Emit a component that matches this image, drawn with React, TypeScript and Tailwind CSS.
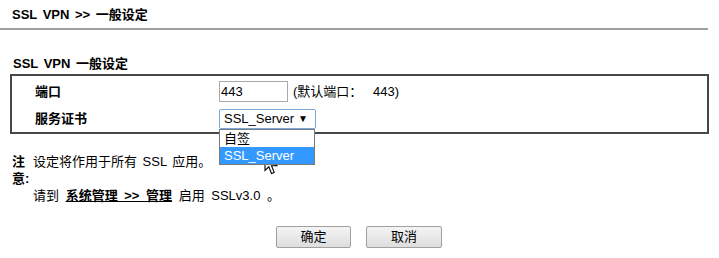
const font = "font-['Liberation_Sans','Noto_Sans_CJK_SC',sans-serif]";

function Cursor() {
  return (
    <svg
      className="absolute left-[264px] top-[153px]"
      width="15"
      height="22"
      viewBox="0 0 15 22"
    >
      <path
        d="M1 1 L1 17.5 L4.8 13.8 L7.5 20.5 L10.2 19.4 L7.5 12.8 L12.8 12.8 Z"
        fill="#fff"
        stroke="#000"
        strokeWidth="1.1"
        strokeLinejoin="miter"
      />
    </svg>
  );
}

export default function App() {
  return (
    <div className={`relative w-[719px] h-[258px] bg-white text-[13px] text-black [word-spacing:2px] ${font}`}>
      {/* Page title */}
      <div className="pt-[7px] pl-[12px] font-bold leading-[16px]">SSL VPN &gt;&gt; 一般设定</div>
      <div className="mt-[5px] h-[2px] w-[708px] bg-[#a0a0a0]" />

      {/* Section */}
      <div className="mt-[26px] pl-[13px] font-bold leading-[16px]">SSL VPN 一般设定</div>
      <div className="ml-[10px] mt-[2px] w-[699px] h-[60px] border-2 border-[#474747] pt-[5px] pl-[23px]">
        <div className="grid grid-cols-[184px_1fr] gap-y-[7px]">
          <div className="font-bold leading-[21px]">端口</div>
          <div className="flex items-center">
            <div className="w-[69px] h-[21px] border border-[#a9a9a9] px-[1px] leading-[19px]">443</div>
            <span className="ml-[5px] [word-spacing:7px]">(默认端口： 443)</span>
          </div>
          <div className="font-bold leading-[20px]">服务证书</div>
          <div className="relative">
            <div className="flex items-center justify-between w-[97px] h-[20px] border border-[#7aa7dc] rounded-[2px] pl-[4px] pr-[7px] leading-[18px]">
              <span>SSL_Server</span>
              <span className="text-[10px]">▼</span>
            </div>
            <div className="absolute left-0 top-[20px] w-[96px] border border-[#7a7a7a] bg-white z-10">
              <div className="h-[17px] pl-[4px] leading-[17px]">自签</div>
              <div className="h-[17px] pl-[4px] leading-[17px] bg-[#3399ff] text-white">SSL_Server</div>
            </div>
          </div>
        </div>
      </div>

      {/* Note */}
      <div className="mt-[19px] flex pl-[12px] leading-[17px]">
        <div className="w-[21px] font-bold">
          <div>注</div>
          <div>意:</div>
        </div>
        <div>
          <div>设定将作用于所有 SSL 应用。</div>
          <div className="mt-[17px] [word-spacing:3px]">
            请到 <span className="font-bold underline">系统管理 &gt;&gt; 管理</span> 启用 SSLv3.0 。
          </div>
        </div>
      </div>

      {/* Buttons */}
      <div className="mt-[22px] flex justify-center gap-[15px]">
        <button className="w-[75px] h-[22px] border border-[#a0a0a0] rounded-[2px] bg-gradient-to-b from-[#f4f4f4] to-[#dedede] ml-[-1px]">
          确定
        </button>
        <button className="w-[76px] h-[22px] border border-[#a0a0a0] rounded-[2px] bg-gradient-to-b from-[#f4f4f4] to-[#dedede]">
          取消
        </button>
      </div>

      <Cursor />
    </div>
  );
}
